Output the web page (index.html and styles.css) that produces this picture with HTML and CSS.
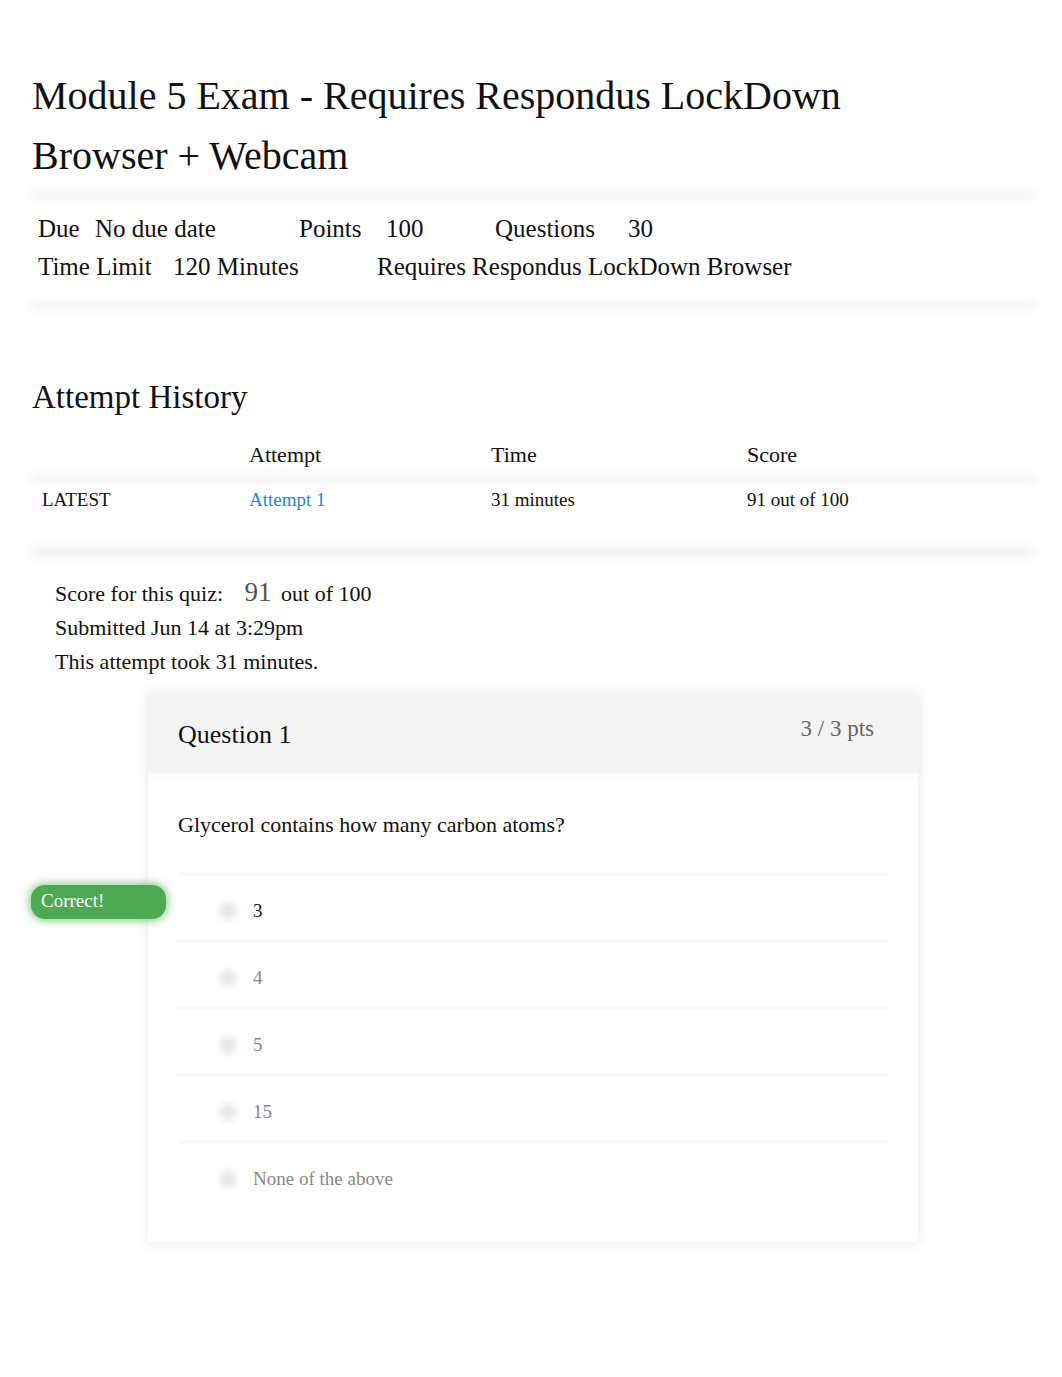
FILE: index.html
```html
<!DOCTYPE html>
<html lang="en">
<head>
    <meta charset="UTF-8">
    <link rel="stylesheet" href="styles.css">
    <title>Module 5 Exam</title>
</head>
<body>
  <div class="page">
    <h1 class="title">Module 5 Exam - Requires Respondus LockDown Browser + Webcam</h1>
    <div class="band"></div>
    <div class="details">
      <div class="detailRow">
        <span class="c1">Due</span><span class="c2">No due date</span>
        <span class="c3">Points</span><span class="c4">100</span>
        <span class="c5">Questions</span><span>30</span>
      </div>
      <div class="detailRow">
        <span class="c6">Time Limit</span><span class="c2">120 Minutes</span>
        <span>Requires Respondus LockDown Browser</span>
      </div>
    </div>
    <div class="band"></div>

    <h2 class="history">Attempt History</h2>
    <div class="attempts">
      <div class="attRow attHead">
        <span></span><span>Attempt</span><span>Time</span><span>Score</span>
      </div>
      <div class="band thin"></div>
      <div class="attRow attBody">
        <span>LATEST</span><span><a class="attLink">Attempt 1</a></span><span>31 minutes</span><span>91 out of 100</span>
      </div>
      <div class="band lower"></div>
    </div>

    <div class="summary">
      <div>Score for this quiz: <span class="bigScore">91</span> out of 100</div>
      <div>Submitted Jun 14 at 3:29pm</div>
      <div>This attempt took 31 minutes.</div>
    </div>

    <div class="questionWrap">
      <div class="correct">Correct!</div>
      <div class="question">
        <div class="qHead">
          <span class="qName">Question 1</span>
          <span class="qPts">3 / 3 pts</span>
        </div>
        <div class="qBody">
          <p class="qText">Glycerol contains how many carbon atoms?</p>
          <div class="answers">
            <div class="answer chosen"><span class="radio"></span>3</div>
            <div class="answer"><span class="radio"></span>4</div>
            <div class="answer"><span class="radio"></span>5</div>
            <div class="answer"><span class="radio"></span>15</div>
            <div class="answer"><span class="radio"></span>None of the above</div>
          </div>
        </div>
      </div>
    </div>
  </div>
</body>
</html>
```

FILE: styles.css
```css
body {
  margin: 0;
  background: #fff;
  font-family: "Liberation Serif", "Times New Roman", serif;
  color: #111;
}

.page {
  padding: 66px 27px 120px 30px;
}

.title {
  font-weight: normal;
  font-size: 40px;
  line-height: 60px;
  margin: 0 0 0 2px;
  width: 880px;
}

.band {
  height: 8px;
  margin: 5px 0;
  background: #f0f0f0;
  filter: blur(5px);
}

.details {
  padding: 6px 8px 10px;
  font-size: 25px;
}

.detailRow {
  display: flex;
  height: 38px;
  line-height: 38px;
  white-space: nowrap;
}

/* column widths of the details table */
.c1 { width: 57px; }
.c2 { width: 204px; }
.c3 { width: 87px; }
.c4 { width: 109px; }
.c5 { width: 133px; }
.c6 { width: 135px; }

.history {
  font-weight: normal;
  font-size: 33px;
  margin: 68px 0 0 2px;
  line-height: 40px;
}

.attempts {
  margin-top: 18px;
}

.attRow {
  display: grid;
  grid-template-columns: 207px 242px 256px 1fr;
  padding-left: 12px;
}

.attHead {
  font-size: 22px;
  line-height: 40px;
}

.band.thin {
  margin: 0;
  height: 8px;
}

.attBody {
  font-size: 19px;
  line-height: 34px;
  padding-bottom: 30px;
}

.attLink {
  color: #1a86e8;
}

.band.lower {
  margin: 0;
  height: 10px;
}

.summary {
  padding: 18px 0 0 25px;
  font-size: 22px;
  line-height: 34px;
}

.bigScore {
  font-size: 27px;
  color: #555;
  margin: 0 4px 0 16px;
}

.questionWrap {
  position: relative;
  margin: 14px 0 0 118px;
  width: 770px;
}

.correct {
  position: absolute;
  left: -117px;
  top: 192px;
  width: 125px;
  padding: 0 0 0 10px;
  height: 34px;
  line-height: 32px;
  font-size: 19px;
  color: #fff;
  background: #4caa50;
  border-radius: 14px;
  box-shadow: 0 0 7px 3px rgba(76, 175, 80, 0.5);
}

.question {
  background: #fff;
  box-shadow: 0 0 10px 3px rgba(0, 0, 0, 0.06);
}

.qHead {
  background: #f4f4f4;
  height: 80px;
  display: flex;
  justify-content: space-between;
  padding: 0 44px 0 30px;
  box-shadow: 0 4px 8px rgba(0, 0, 0, 0.03);
}

.qName {
  font-size: 26px;
  line-height: 84px;
}

.qPts {
  font-size: 23px;
  color: #666;
  line-height: 72px;
}

.qBody {
  padding: 38px 30px 35px;
}

.qText {
  margin: 0 0 33px;
  font-size: 22px;
  line-height: 28px;
}

.answer {
  display: flex;
  align-items: center;
  height: 67px;
  font-size: 19px;
  color: #888;
  border-top: 4px solid #f9f9f9;
  box-sizing: border-box;
  padding: 6px 0 0 41px;
}

.answer.chosen {
  color: #111;
}

.radio {
  width: 18px;
  height: 18px;
  border-radius: 50%;
  background: #e8e8e8;
  filter: blur(3px);
  margin-right: 16px;
}
```
